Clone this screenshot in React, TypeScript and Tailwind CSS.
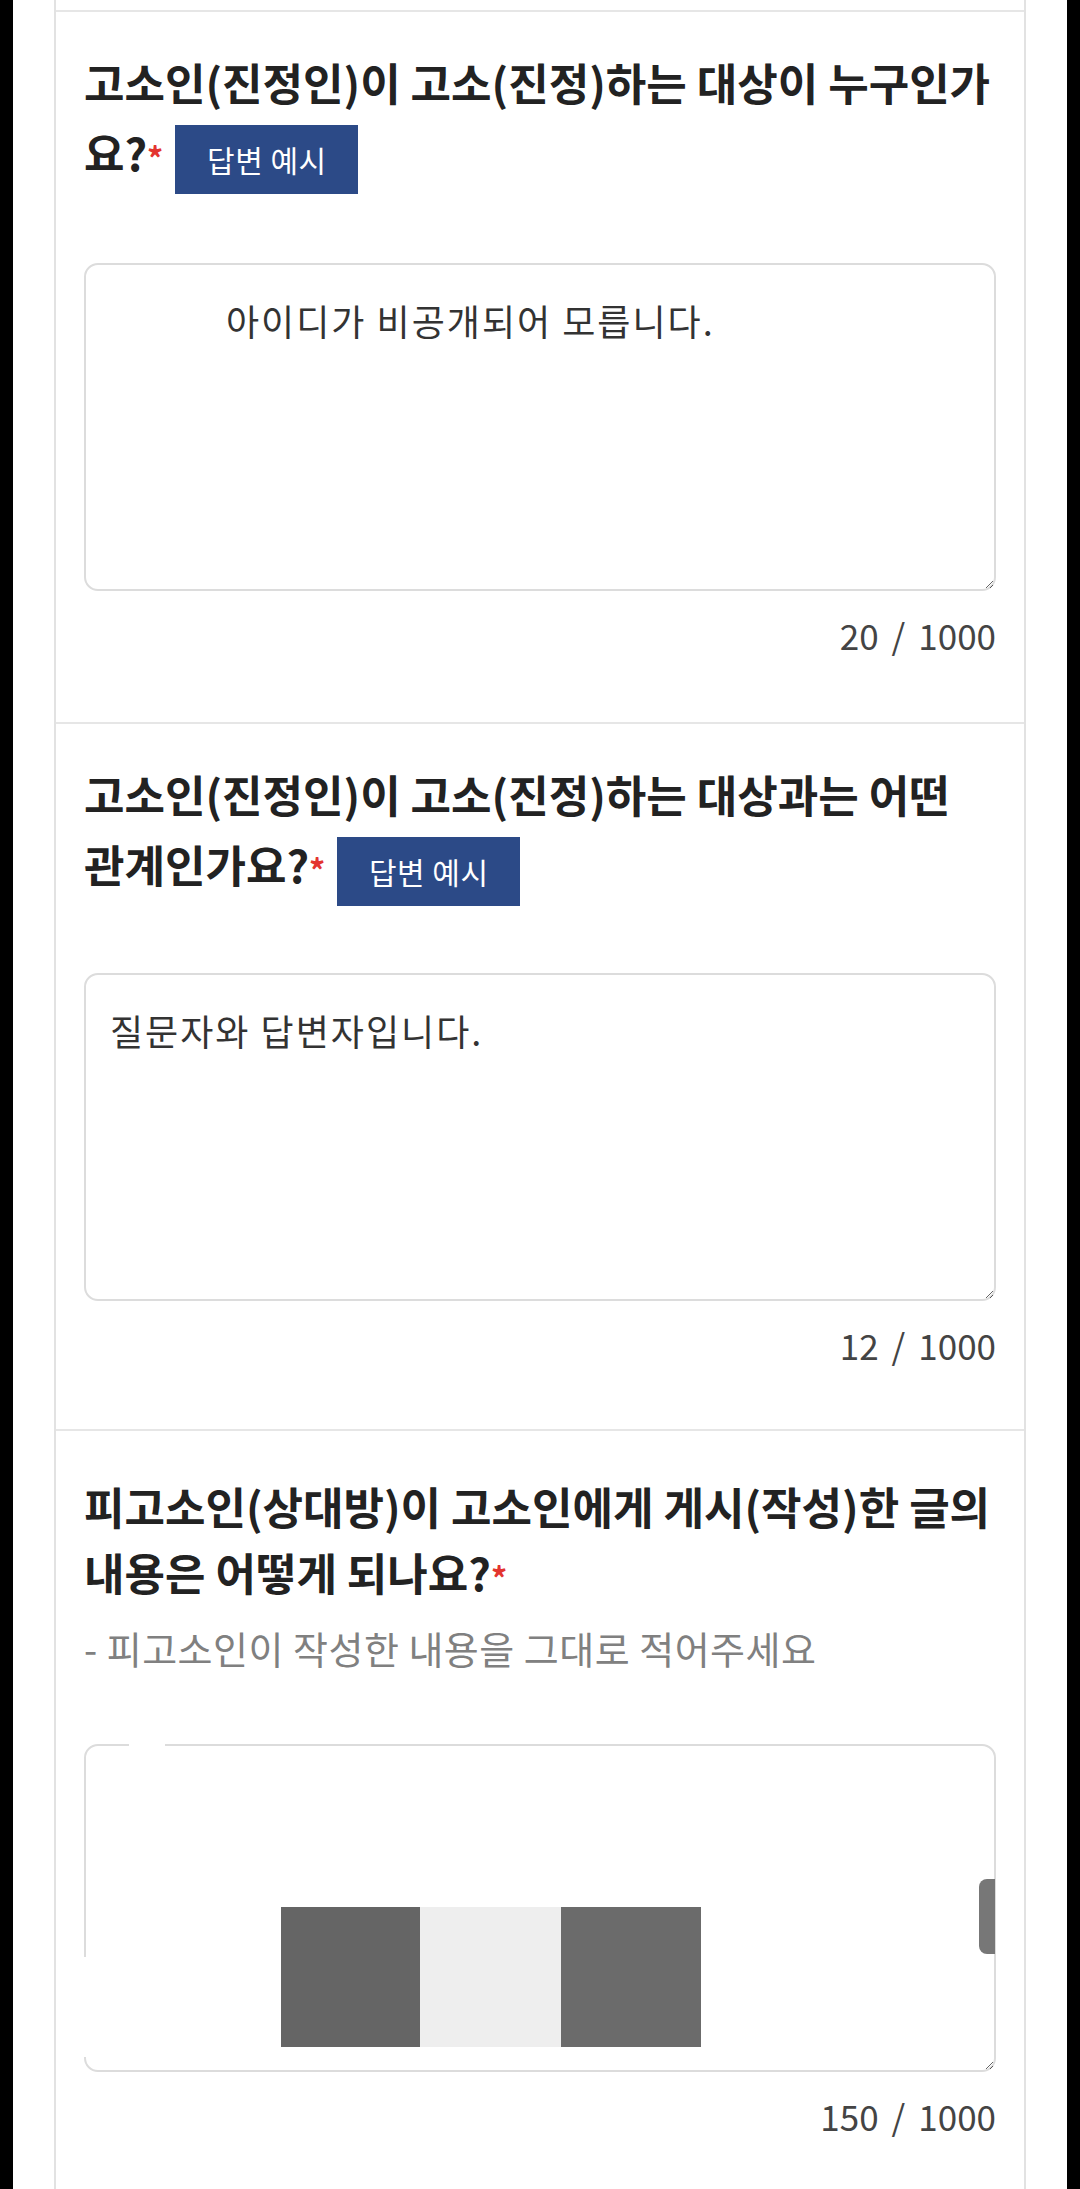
import React from 'react';

const font = "font-['Noto_Sans_CJK_KR','Noto_Sans',sans-serif]";

const ExampleButton = () => (
  <span className="ml-[12px] inline-block h-[69px] w-[183px] my-[10px] bg-[#2c4a87] text-center align-middle text-[30px] leading-[69px] font-normal tracking-[0.5px] text-white">
    답변 예시
  </span>
);

const Required = () => <span className="text-[32px] text-[#e3342f]">*</span>;

interface AnswerProps {
  value: string;
  count: number;
  indent?: boolean;
  children?: React.ReactNode;
}

const AnswerBox = ({ value, count, indent, children }: AnswerProps) => (
  <>
    <div className="relative">
      <textarea
        readOnly
        defaultValue={value}
        className={`block h-[328px] w-full rounded-[14px] border-2 border-[#dcdcdc] bg-white px-[24px] pt-[30px] text-[36px] leading-[50px] tracking-[2px] text-[#333] outline-none ${font} ${indent ? 'indent-[116px]' : ''}`}
      />
      {children}
    </div>
    <div className={`mt-[20px] text-right text-[35px] leading-[48px] text-[#444] ${font}`}>
      {count}
      <span className="mx-[13px]">/</span>
      1000
    </div>
  </>
);

const App = () => {
  return (
    <div className={`min-h-[2189px] bg-black px-[13px] ${font}`}>
      <div className="min-h-[2189px] bg-white px-[41px]">
        <div className="min-h-[2189px] border-x-2 border-[#e2e2e2]">
          <div className="h-[10px]" />

          {/* 대상 */}
          <section className="border-t-2 border-[#e6e6e6] px-[28px] pt-[37px] pb-[63px]">
            <h3 className="text-[44px] leading-[66px] font-bold text-[#222]">
              고소인(진정인)이 고소(진정)하는 대상이 누구인가요?<Required />
              <ExampleButton />
            </h3>
            <div className="mt-[59px]">
              <AnswerBox value="아이디가 비공개되어 모릅니다." count={20} indent />
            </div>
          </section>

          {/* 관계 */}
          <section className="border-t-2 border-[#e6e6e6] px-[28px] pt-[37px] pb-[60px]">
            <h3 className="text-[44px] leading-[66px] font-bold text-[#222]">
              고소인(진정인)이 고소(진정)하는 대상과는 어떤 관계인가요?<Required />
              <ExampleButton />
            </h3>
            <div className="mt-[57px]">
              <AnswerBox value="질문자와 답변자입니다." count={12} />
            </div>
          </section>

          {/* 게시 내용 */}
          <section className="border-t-2 border-[#e6e6e6] px-[28px] pt-[42px] pb-[60px]">
            <h3 className="text-[44px] leading-[66px] font-bold text-[#222]">
              피고소인(상대방)이 고소인에게 게시(작성)한 글의 내용은 어떻게 되나요?<Required />
            </h3>
            <p className="mt-[10px] text-[38px] leading-[56px] tracking-[0.5px] text-[#808080]">
              - 피고소인이 작성한 내용을 그대로 적어주세요
            </p>
            <div className="mt-[68px]">
              <AnswerBox value="" count={150}>
                {/* 가려진 이미지 */}
                <div className="absolute top-[163px] left-[197px] flex h-[140px]">
                  <div className="w-[139px] bg-[#656565]" />
                  <div className="w-[141px] bg-[#eeeeee]" />
                  <div className="w-[140px] bg-[#6b6b6b]" />
                </div>
                <div className="absolute top-[135px] left-[895px] h-[75px] w-[16px] rounded-l-[8px] bg-[#777]" />
                <div className="absolute top-[213px] left-0 h-[100px] w-[3px] bg-white" />
                <div className="absolute top-0 left-[45px] h-[3px] w-[36px] bg-white" />
              </AnswerBox>
            </div>
          </section>
        </div>
      </div>
    </div>
  );
};

export default App;
